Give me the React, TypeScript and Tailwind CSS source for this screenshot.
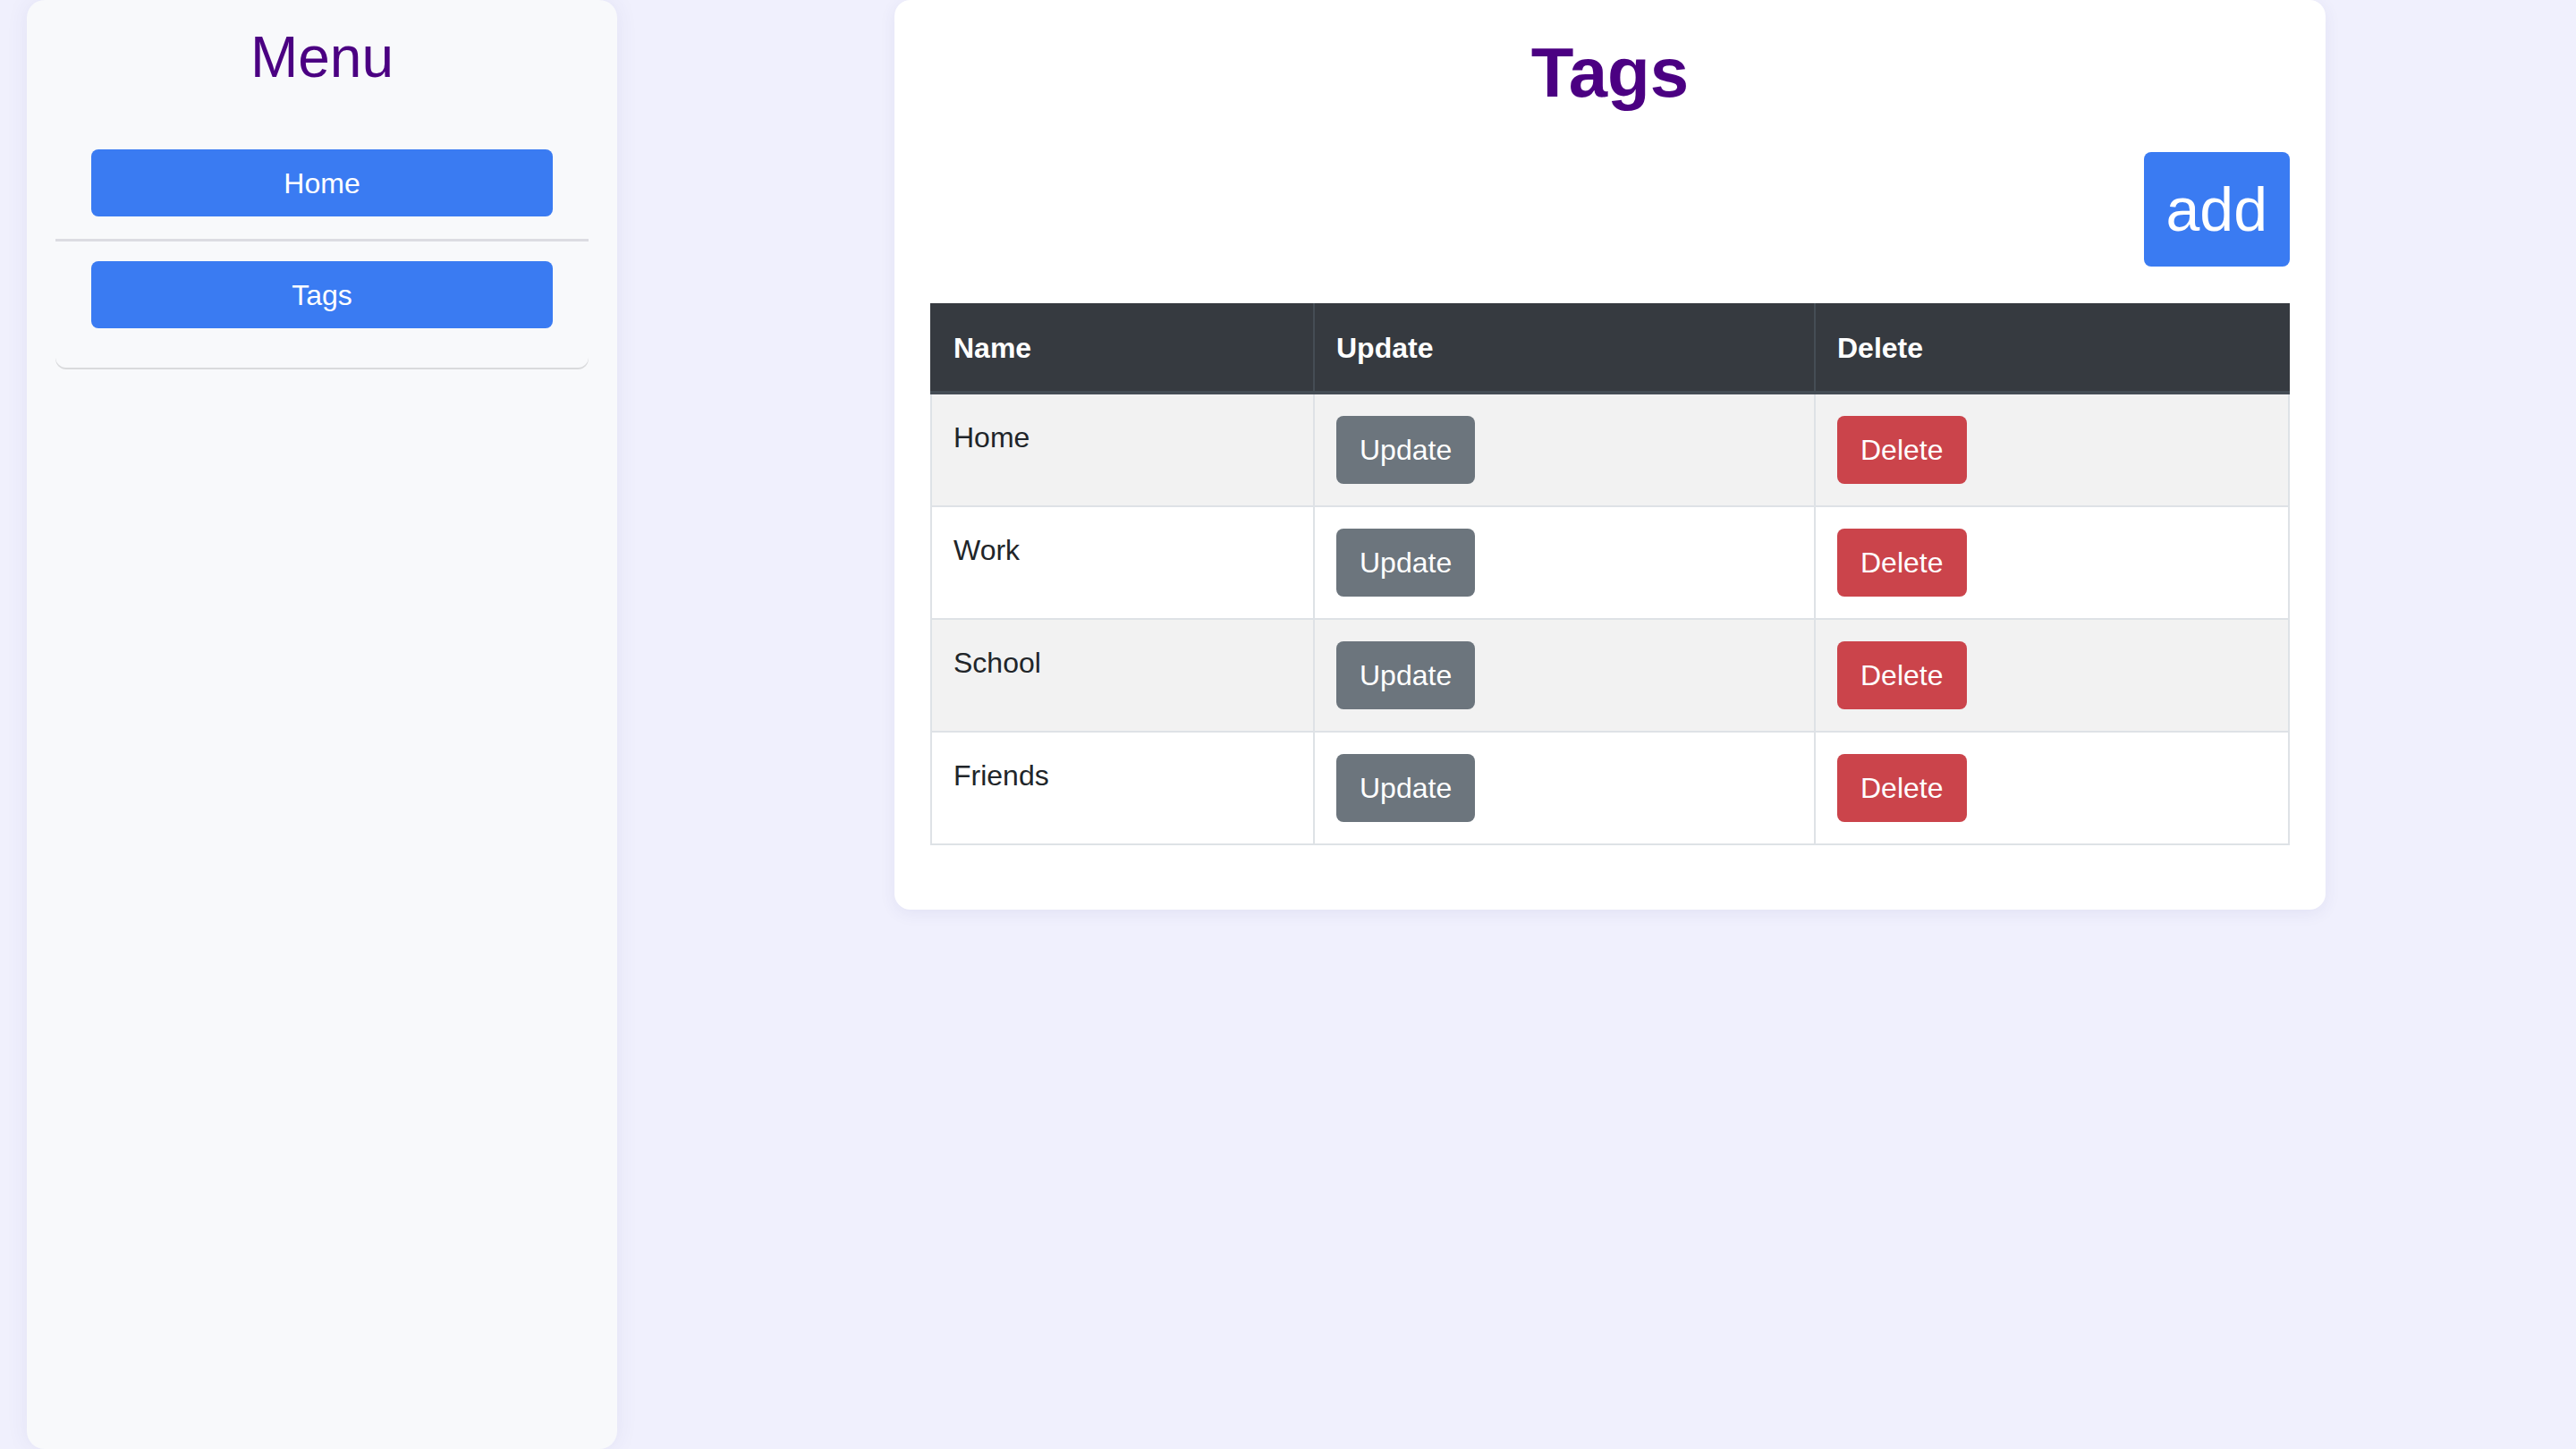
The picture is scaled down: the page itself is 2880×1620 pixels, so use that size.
import React from 'react';

const tags = ['Home', 'Work', 'School', 'Friends'];

const Sidebar: React.FC = () => {
  return (
    <aside className="ml-[30px] mr-[30px] w-[660px] h-[1620px] shrink-0 rounded-[20px] bg-[#f8f9fb] shadow-[0_0_24px_rgba(60,60,140,0.08)] px-[32px] pt-[27px]">
      <h2 className="text-center text-[64px] leading-[74px] text-[#4b0082]">Menu</h2>
      <ul className="mt-[66px] rounded-b-[12px] shadow-[0_2px_0_rgba(0,0,0,0.12)]">
        <li className="px-[40px] pb-[25px] border-b-[3px] border-[#dcdce2]">
          <button className="w-full h-[75px] rounded-[8px] bg-[#3a7bf2] text-white text-[32px]">Home</button>
        </li>
        <li className="px-[40px] pt-[22px] pb-[44px]">
          <button className="w-full h-[75px] rounded-[8px] bg-[#3a7bf2] text-white text-[32px]">Tags</button>
        </li>
      </ul>
    </aside>
  );
};

const TagsTable: React.FC = () => {
  return (
    <table className="w-full border-collapse border-2 border-[#dee2e6] text-[32px] leading-[48px] text-[#212529]">
      <thead>
        <tr className="bg-[#363a40] text-white">
          <th className="w-[428px] text-left font-bold px-[24px] py-[24px] border-2 border-[#363a40] border-r-[#454d55] border-b-4 border-b-[#454d55]">Name</th>
          <th className="w-[560px] text-left font-bold px-[24px] py-[24px] border-2 border-[#363a40] border-r-[#454d55] border-b-4 border-b-[#454d55]">Update</th>
          <th className="text-left font-bold px-[24px] py-[24px] border-2 border-[#363a40] border-b-4 border-b-[#454d55]">Delete</th>
        </tr>
      </thead>
      <tbody>
        {tags.map((tag, i) => (
          <tr key={tag} className={i % 2 === 0 ? 'bg-[#f2f2f2]' : 'bg-white'}>
            <td className="align-top px-[24px] py-[24px] border-2 border-[#dee2e6]">{tag}</td>
            <td className="align-top px-[24px] py-[24px] border-2 border-[#dee2e6]">
              <button className="h-[76px] px-[26px] rounded-[8px] bg-[#6c757d] text-white text-[32px]">Update</button>
            </td>
            <td className="align-top px-[24px] py-[24px] border-2 border-[#dee2e6]">
              <button className="h-[76px] px-[26px] rounded-[8px] bg-[#cb444b] text-white text-[32px]">Delete</button>
            </td>
          </tr>
        ))}
      </tbody>
    </table>
  );
};

const App: React.FC = () => {
  return (
    <div className="flex min-h-[1620px] bg-[#f0f0fd] overflow-hidden" style={{ fontFamily: '"Liberation Sans", Arial, sans-serif' }}>
      <Sidebar />
      <main className="flex-1 flex justify-center">
        <div className="w-[1600px] self-start rounded-[18px] bg-white shadow-[0_4px_18px_rgba(60,60,140,0.08)] px-[40px] pt-[35px] pb-[72px]">
          <h1 className="text-center font-bold text-[78px] leading-[93px] text-[#4b0082]">Tags</h1>
          <div className="flex justify-end mt-[42px]">
            <button className="h-[128px] px-[25px] rounded-[8px] bg-[#3a7bf2] text-white text-[68px] leading-none">add</button>
          </div>
          <div className="mt-[41px]">
            <TagsTable />
          </div>
        </div>
      </main>
    </div>
  );
};

export default App;
